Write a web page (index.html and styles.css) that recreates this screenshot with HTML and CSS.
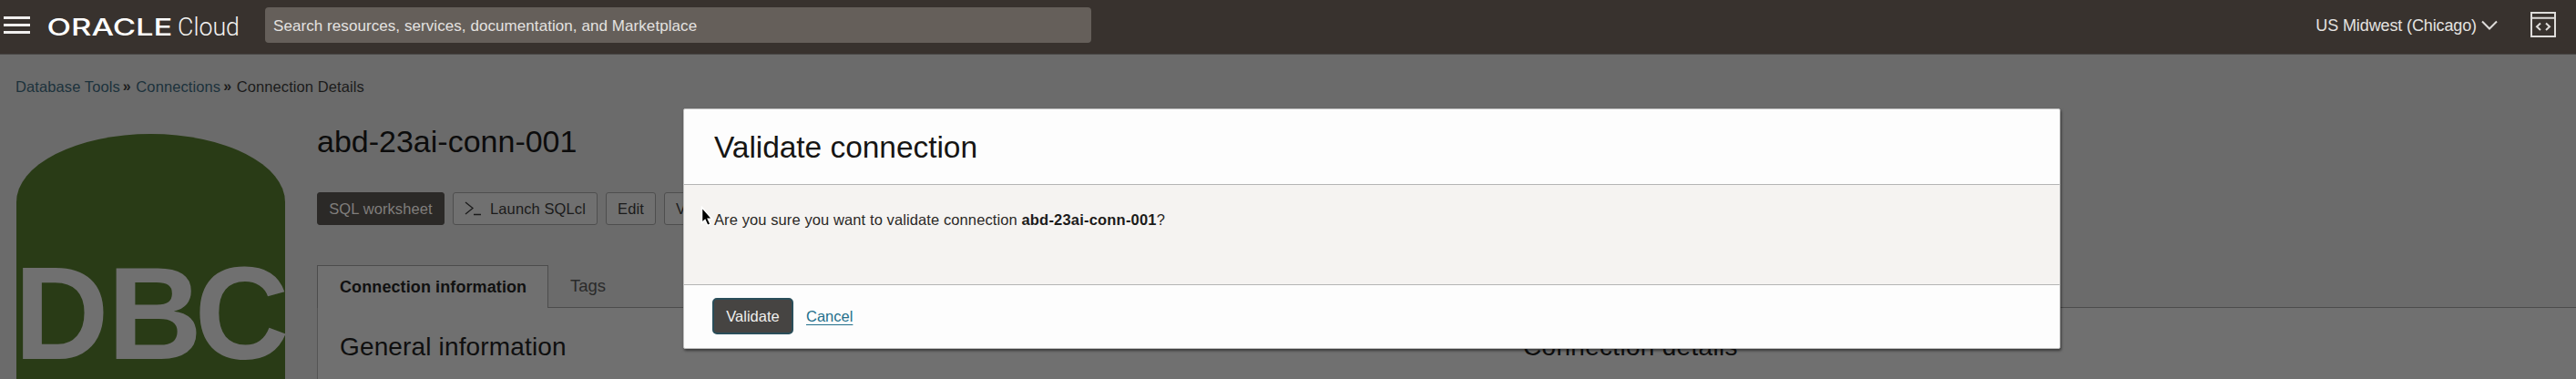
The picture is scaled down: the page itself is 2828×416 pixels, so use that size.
FILE: index.html
```html
<!DOCTYPE html>
<html lang="en">
<head>
<meta charset="utf-8">
<title>Connection Details</title>
<link rel="stylesheet" href="styles.css">
</head>
<body>
<header class="topbar">
  <button class="menu" aria-label="Menu"><span></span><span></span><span></span></button>
  <svg class="brand" width="212" height="30" viewBox="0 0 212 30">
    <text class="brand-oracle" x="-1.5" y="24" textLength="138" lengthAdjust="spacingAndGlyphs">ORACLE</text>
    <text class="brand-cloud" x="142" y="24" textLength="68" lengthAdjust="spacingAndGlyphs">Cloud</text>
  </svg>
  <div class="search">Search resources, services, documentation, and Marketplace</div>
  <div class="region">US Midwest (Chicago)
    <svg width="18" height="12" viewBox="0 0 18 12"><path d="M1 1.5 9 9.5 17 1.5" fill="none" stroke="#dedcda" stroke-width="2"/></svg>
  </div>
  <svg class="devtools" width="28" height="28" viewBox="0 0 28 28" fill="none" stroke="#dedcda" stroke-width="2">
    <rect x="1" y="1" width="26" height="26"/><path d="M1 6.8H27M11 12.5 7 16.3 11 20M17 12.5 21 16.3 17 20"/>
  </svg>
</header>
<nav class="crumbs"><a>Database Tools</a><i>»</i><a>Connections</a><i>»</i><span>Connection Details</span></nav>
<main class="page">
  <svg class="badge" width="295" height="269" viewBox="0 0 295 269">
    <path d="M0 75A147.500 75 0 0 1 295 75V269H0Z" fill="#293b16"/>
    <text class="badge-text" y="246.500" x="-2.500 100 195.500">DBC</text>
  </svg>
  <section class="details">
    <h1>abd-23ai-conn-001</h1>
    <div class="actions">
      <button class="btn primary">SQL worksheet</button>
      <button class="btn launch"><svg width="18" height="16" viewBox="0 0 18 16"><path d="M1 1 9 7.500 1 14M10 14.500H18" fill="none" stroke="#1b1b1b" stroke-width="1.300"/></svg>Launch SQLcl</button>
      <button class="btn edit">Edit</button>
      <button class="btn validate">Validate</button>
    </div>
    <div class="tabs">
      <div class="tab active">Connection information</div>
      <div class="tab">Tags</div>
    </div>
    <div class="panel">
      <h2>General information</h2>
      <h2 class="wide">Connection details</h2>
    </div>
  </section>
</main>
<div class="dialog" role="dialog">
  <div class="dialog-head">Validate connection</div>
  <div class="dialog-body">Are you sure you want to validate connection <b>abd-23ai-conn-001</b>?</div>
  <div class="dialog-foot"><button class="confirm">Validate</button><a class="cancel">Cancel</a></div>
</div>
<svg class="cursor" width="17" height="25" viewBox="0 0 17 25"><path d="M1.500 1.500V18.500L5 15.500 7.800 21.500 11 20 8.300 14.300H12.800Z" fill="#000" stroke="#fff" stroke-width="1.500"/></svg>
</body>
</html>
```
FILE: styles.css
```css
* { box-sizing: border-box; }
body {
  margin: 0;
  width: 2828px;
  height: 416px;
  overflow: hidden;
  position: relative;
  background: #6b6b6b;
  font-family: "Liberation Sans", Arial, sans-serif;
  font-size: 16.5px;
  letter-spacing: 0.1px;
  color: #1b1b1b;
}
button { font: inherit; letter-spacing: inherit; margin: 0; padding: 0; }
h1, h2 { margin: 0; font-weight: 400; }

.topbar {
  display: flex;
  align-items: flex-start;
  height: 60px;
  background: #38322e;
  border-bottom: 1px solid #4a4846;
  color: #e4e2e0;
}
.menu {
  display: flex;
  flex-direction: column;
  gap: 5px;
  width: 29px;
  margin: 18px 0 0 4px;
  background: none;
  border: 0;
}
.menu span { height: 3px; background: #f0efee; }
.brand { margin: 15px 0 0 20px; overflow: visible; letter-spacing: 0; }
.brand-oracle { font-family: Inter, "Liberation Sans", sans-serif; font-weight: 500; font-size: 25px; fill: #fff; }
.brand-cloud { font-family: Roboto, "Liberation Sans", sans-serif; font-weight: 300; font-size: 27px; fill: #f4f3f2; }
.search {
  width: 907px;
  height: 39px;
  margin: 8px 0 0 26px;
  padding-left: 9px;
  line-height: 41px;
  font-size: 17px;
  letter-spacing: 0.07px;
  background: #655f5a;
  border-radius: 4px;
}
.region {
  display: flex;
  align-items: center;
  gap: 5px;
  height: 20px;
  margin: 18px 36px 0 auto;
  font-size: 18px;
  letter-spacing: -0.120px;
}
.devtools { margin: 13px 22px 0 0; }

.crumbs {
  display: flex;
  height: 87px;
  padding: 25px 0 0 17px;
  line-height: 20px;
}
.crumbs a { color: #1c323c; }
.crumbs i { width: 17.500px; padding-left: 3px; font-style: normal; font-size: 16px; font-weight: 700; }

.page { display: flex; height: 269px; padding-left: 18px; }
.badge { flex: none; overflow: visible; }
.badge-text { font-weight: 700; font-size: 144px; letter-spacing: 0; fill: #707070; }
.details { flex: 1; margin-left: 35px; min-width: 0; }
h1 { height: 71px; margin-top: -7px; font-size: 34px; line-height: 30px; letter-spacing: 0; color: #0c0c0c; }
.actions { display: flex; height: 80px; gap: 9px; }
.btn {
  height: 36px;
  border: 1px solid #4e4e4e;
  border-radius: 3px;
  background: #707070;
  color: #1b1b1b;
}
.btn.primary { width: 140px; background: #2b2927; border-color: #2b2927; color: #807e7c; }
.launch { display: flex; align-items: center; justify-content: center; gap: 10px; width: 159px; }
.edit { width: 55px; }
.validate { width: 85px; }

.tabs { display: flex; height: 47px; border-bottom: 1px solid #4c4c4c; line-height: 46px; font-size: 18.500px; }
.tab { padding-left: 24px; color: #2a2a2a; letter-spacing: 0; }
.tab.active {
  width: 254px;
  height: 47px;
  padding-left: 24px;
  background: #707070;
  border: 1px solid #4c4c4c;
  border-bottom: 0;
  font-size: 18px;
  font-weight: 700;
  color: #111;
  letter-spacing: 0.1px;
}
.panel { display: grid; grid-template-columns: 1299px 1fr; height: 78px; padding: 27px 0 0 24px; border-left: 1px solid #555; background: #707070; }
h2 { font-size: 28px; line-height: 32px; letter-spacing: 0.150px; color: #0f0f0f; }
h2.wide { letter-spacing: 0.300px; }

.dialog {
  position: absolute;
  left: 750px;
  top: 119px;
  width: 1512px;
  height: 264px;
  display: grid;
  grid-template-rows: 82px 111px 69px;
  background: #fdfdfd;
  border: 1px solid #bdbdbd;
  border-radius: 2px;
  box-shadow: 1px 2px 3px rgba(0, 0, 0, 0.5);
}
.dialog-head { padding-left: 33px; line-height: 84px; font-size: 33.500px; letter-spacing: -0.050px; color: #161513; }
.dialog-body { padding: 28px 0 0 33px; line-height: 20px; background: #f5f3f1; border: 1px solid #b4b4b4; border-width: 1px 0; color: #2b2927; }
.dialog-body b { letter-spacing: 0.200px; color: #1c1b1a; }
.dialog-foot { display: flex; gap: 14px; padding: 14px 0 0 31px; }
.confirm { width: 89px; height: 40px; background: #464442; border: 2px solid #2a4e5a; border-radius: 5px; color: #f0efee; letter-spacing: 0; }
.cancel { line-height: 40px; color: #24708c; letter-spacing: 0; text-decoration: underline; text-underline-offset: 3px; }
.cursor { position: absolute; left: 769px; top: 226px; }
```
